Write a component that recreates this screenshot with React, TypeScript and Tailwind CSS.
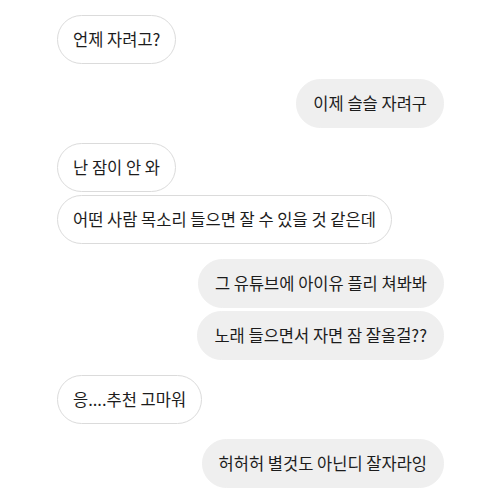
type Msg = { text: string; mine: boolean; tight?: boolean };

const messages: Msg[] = [
  { text: '언제 자려고?', mine: false },
  { text: '이제 슬슬 자려구', mine: true },
  { text: '난 잠이 안 와', mine: false },
  { text: '어떤 사람 목소리 들으면 잘 수 있을 것 같은데', mine: false, tight: true },
  { text: '그 유튜브에 아이유 플리 쳐봐봐', mine: true },
  { text: '노래 들으면서 자면 잠 잘올걸??', mine: true, tight: true },
  { text: '응....추천 고마워', mine: false },
  { text: '허허허 별것도 아닌디 잘자라잉', mine: true },
];

function Bubble({ msg }: { msg: Msg }) {
  return (
    <div className={msg.mine ? 'flex justify-end' : 'flex justify-start'}>
      <div
        className={
          msg.mine
            ? 'h-[49px] flex items-center px-[16px] rounded-full bg-[#efefef] border border-[#efefef]'
            : 'h-[49px] flex items-center px-[15px] rounded-full bg-white border border-[#dbdbdb]'
        }
      >
        <span className="text-[16.5px] text-[#1c1c1c] whitespace-nowrap">{msg.text}</span>
      </div>
    </div>
  );
}

export default function App() {
  return (
    <div
      className="w-[500px] h-[500px] bg-white pt-[15px] pr-[56px] pl-[57px] overflow-hidden"
      style={{ fontFamily: '"Noto Sans CJK KR", "Noto Sans", sans-serif' }}
    >
      <div className="flex flex-col">
        {messages.map((m, i) => (
          <div key={i} className={i === 0 ? '' : m.tight ? 'mt-[3px]' : 'mt-[15px]'}>
            <Bubble msg={m} />
          </div>
        ))}
      </div>
    </div>
  );
}
